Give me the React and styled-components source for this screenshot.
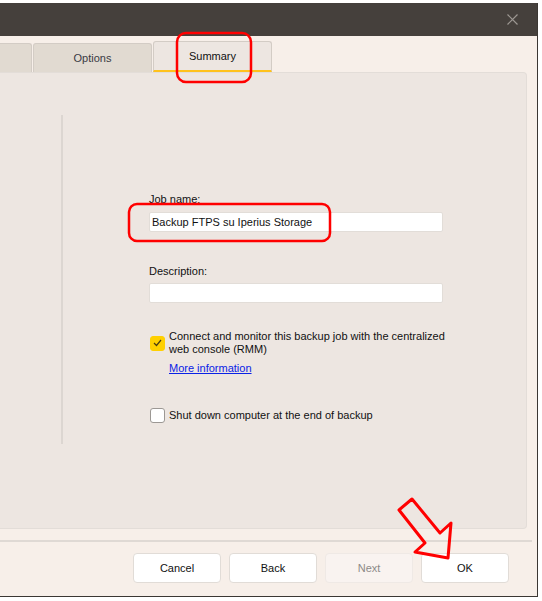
import React from 'react';
import styled, { createGlobalStyle } from 'styled-components';

const GlobalStyle = createGlobalStyle`
  html, body {
    margin: 0;
    padding: 0;
    background: #ffffff;
  }
  #root {
    width: 542px;
    height: 601px;
    overflow: hidden;
    position: relative;
    font-family: "Liberation Sans", Arial, sans-serif;
    font-size: 11px;
    color: #111;
  }
`;

const Window = styled.div`
  margin-top: 3px;
  width: 537px;
  height: 593px;
  background: #f7efe9;
  border-right: 1px solid #3b3733;
  border-bottom: 1px solid #3b3733;
  display: flex;
  flex-direction: column;
`;

const TitleBar = styled.div`
  height: 33px;
  flex-shrink: 0;
  background: #45403c;
  display: flex;
  align-items: center;
  justify-content: flex-end;
  padding-right: 19px;
`;

const TabRow = styled.div`
  height: 36px;
  flex-shrink: 0;
  display: flex;
  align-items: flex-end;
  gap: 1px;
`;

const Tab = styled.div`
  width: 117px;
  flex-shrink: 0;
  height: ${({ $active }) => ($active ? '28px' : '27px')};
  margin-left: ${({ $offset }) => $offset || 0}px;
  background: ${({ $active }) => ($active ? '#ede6e1' : '#e1dad1')};
  border: 1px solid #d3ccc5;
  border-bottom: ${({ $active }) => ($active ? '2px solid #ffc21c' : 'none')};
  border-radius: 3px 3px 0 0;
  display: flex;
  align-items: center;
  justify-content: center;
  color: ${({ $active }) => ($active ? '#111' : '#3a3a44')};
  padding-bottom: ${({ $active }) => ($active ? '0' : '1px')};
`;

const Panel = styled.div`
  height: 455px;
  flex-shrink: 0;
  margin-right: 10px;
  background: #ede6e1;
  border: 1px solid #e3ddd8;
  border-left: none;
  border-radius: 0 4px 4px 0;
  display: flex;
`;

const Divider = styled.div`
  width: 2px;
  height: 329px;
  margin: 42px 0 0 61px;
  background: #dcd6d1;
`;

const Form = styled.div`
  width: 294px;
  margin-left: 86px;
  padding-top: 119px;
  display: flex;
  flex-direction: column;
`;

const Label = styled.div`
  line-height: 14px;
  margin-top: ${({ $top }) => $top || 0}px;
`;

const Input = styled.div`
  height: 18px;
  margin-top: ${({ $top }) => $top || 0}px;
  background: #ffffff;
  border: 1px solid #e2ddd8;
  border-radius: 2px;
  display: flex;
  align-items: center;
  padding-left: 2px;
  color: #111;
`;

const CheckRow = styled.div`
  display: flex;
  align-items: center;
  gap: 4px;
  margin-top: ${({ $top }) => $top || 0}px;
  margin-left: 1px;
`;

const Box = styled.div`
  width: 15px;
  height: 15px;
  flex-shrink: 0;
  box-sizing: border-box;
  border-radius: 3px;
  background: ${({ $checked }) => ($checked ? '#ffd000' : '#ffffff')};
  border: 1px solid ${({ $checked }) => ($checked ? '#ffd000' : '#9c9894')};
  display: flex;
  align-items: center;
  justify-content: center;
`;

const CheckText = styled.div`
  line-height: 13px;
  white-space: nowrap;
`;

const Link = styled.a`
  color: #0a22e6;
  text-decoration: underline;
  line-height: 14px;
  margin: 5px 0 0 20px;
  cursor: pointer;
`;

const Separator = styled.div`
  height: 2px;
  margin: 11px 5px 0 0;
  background: #dfd9d4;
`;

const ButtonRow = styled.div`
  display: flex;
  justify-content: flex-end;
  gap: 8px;
  margin-top: 11px;
  padding-right: 28px;
`;

const Button = styled.div`
  width: 86px;
  height: 28px;
  background: ${({ $disabled }) => ($disabled ? '#f9f3f0' : '#ffffff')};
  border: 1px solid ${({ $disabled }) => ($disabled ? '#efe9e5' : '#e1dcd7')};
  border-radius: 4px;
  display: flex;
  align-items: center;
  justify-content: center;
  color: ${({ $disabled }) => ($disabled ? '#8c8a88' : '#111')};
`;

const Overlay = styled.svg`
  position: absolute;
  top: 0;
  left: 0;
  pointer-events: none;
`;

const CloseIcon = () => (
  <svg width="11" height="11" viewBox="0 0 11 11">
    <path d="M0.5 0.5 L10.5 10.5 M10.5 0.5 L0.5 10.5" stroke="#9d9893" strokeWidth="1.2" />
  </svg>
);

const Check = () => (
  <svg width="9" height="8" viewBox="0 0 9 8">
    <path d="M1 4 L3.5 6.5 L8 1" fill="none" stroke="#4a3c10" strokeWidth="1.2" />
  </svg>
);

const App = () => (
  <>
    <GlobalStyle />
    <Window>
      <TitleBar>
        <CloseIcon />
      </TitleBar>
      <TabRow>
        <Tab $offset={-87} />
        <Tab>Options</Tab>
        <Tab $active>Summary</Tab>
      </TabRow>
      <Panel>
        <Divider />
        <Form>
          <Label>Job name:</Label>
          <Input $top={6}>Backup FTPS su Iperius Storage</Input>
          <Label $top={32}>Description:</Label>
          <Input $top={5} />
          <CheckRow $top={27}>
            <Box $checked>
              <Check />
            </Box>
            <CheckText>
              Connect and monitor this backup job with the centralized
              <br />
              web console (RMM)
            </CheckText>
          </CheckRow>
          <Link>More information</Link>
          <CheckRow $top={33}>
            <Box />
            <CheckText>Shut down computer at the end of backup</CheckText>
          </CheckRow>
        </Form>
      </Panel>
      <Separator />
      <ButtonRow>
        <Button>Cancel</Button>
        <Button>Back</Button>
        <Button $disabled>Next</Button>
        <Button>OK</Button>
      </ButtonRow>
    </Window>
    <Overlay width="542" height="601" viewBox="0 0 542 601">
      <rect x="177" y="33" width="74" height="49" rx="9" fill="none" stroke="#ff0000" strokeWidth="2.5" />
      <rect x="129" y="204" width="201" height="37" rx="8" fill="none" stroke="#ff0000" strokeWidth="2.5" />
      <polygon
        points="399,510 412,499 440,533 451,523 448,558 415,552 425,543"
        fill="none"
        stroke="#ff0000"
        strokeWidth="3"
        strokeLinejoin="round"
      />
    </Overlay>
  </>
);

export default App;
